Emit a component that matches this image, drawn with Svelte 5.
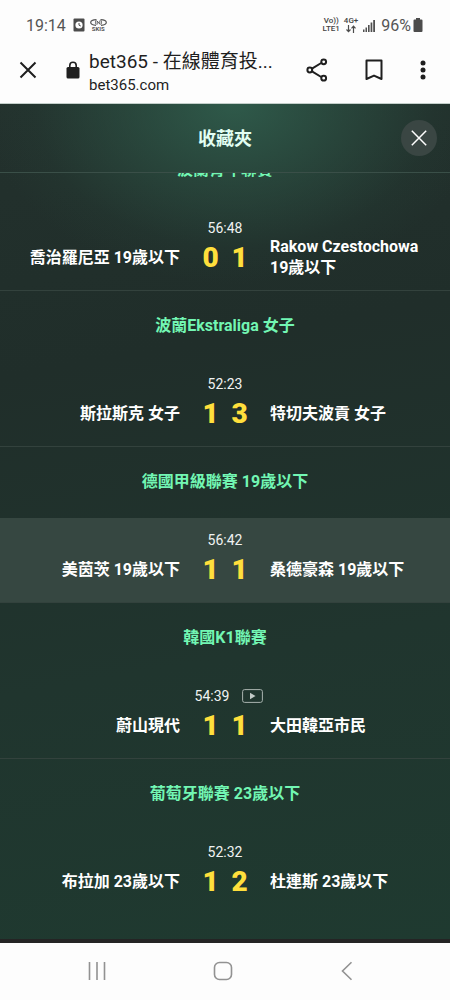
<script>
	const time = '19:14'
	const battery = '96%'

	const groups = [
		{
			league: '波蘭青年聯賽',
			clock: '56:48',
			home: '喬治羅尼亞 19歲以下',
			away: 'Rakow Czestochowa 19歲以下',
			score: [0, 1],
		},
		{
			league: '波蘭Ekstraliga 女子',
			clock: '52:23',
			home: '斯拉斯克 女子',
			away: '特切夫波貢 女子',
			score: [1, 3],
		},
		{
			league: '德國甲級聯賽 19歲以下',
			clock: '56:42',
			home: '美茵茨 19歲以下',
			away: '桑德豪森 19歲以下',
			score: [1, 1],
			active: true,
		},
		{
			league: '韓國K1聯賽',
			clock: '54:39',
			home: '蔚山現代',
			away: '大田韓亞市民',
			score: [1, 1],
			video: true,
		},
		{
			league: '葡萄牙聯賽 23歲以下',
			clock: '52:32',
			home: '布拉加 23歲以下',
			away: '杜連斯 23歲以下',
			score: [1, 2],
		},
	]
</script>

<div class="Screen">
	<header class="Browser">
		<div class="Status">
			<span class="Time">{time}</span>
			<svg class="Alarm" width="12" height="14" viewBox="0 0 12 14">
				<rect x="0.5" y="0.5" width="11" height="13" rx="1" fill="#4c4c4c" />
				<circle cx="6" cy="7" r="3.6" fill="#fff" />
				<path d="M6 5V7.2L7.8 8" fill="none" stroke="#4c4c4c" />
			</svg>
			<span class="Skis">
				<svg width="17" height="7" viewBox="0 0 17 7" fill="none" stroke="#555">
					<path d="M6.5 0.6C2.5 0.8 0.7 2.1 0.7 3.4S2.5 6 6 6.3" stroke-width="1.2" />
					<path d="M10.5 0.6c4 .2 5.8 1.5 5.8 2.8S14.500 6 11 6.300" stroke-width="1.2" />
					<path d="M6.200 1.200C5.200 2.500 5.200 4.300 6.200 5.600M10.800 1.200c1 1.300 1 3.100 0 4.400" />
					<path d="M7.200 5.500V2l2.600 3.200V1.600" stroke-width="0.900" />
				</svg>
				<small>SKIS</small>
			</span>
			<span class="Tiny Push">Vo))<br />LTE1</span>
			<span class="Tiny">
				4G+
				<svg width="10" height="8" viewBox="0 0 10 8" fill="none" stroke="#4c4c4c" stroke-width="1.200">
					<path d="M2.500 0v6.500M0.500 4.500l2 2.200 2-2.200M7.500 8V1.200M5.500 3.400l2-2.200 2 2.200" />
				</svg>
			</span>
			<svg class="Signal" width="13" height="13" viewBox="0 0 13 13" fill="#505050">
				<rect x="0" y="10.500" width="1.500" height="2.500" />
				<rect x="2.500" y="8.500" width="1.500" height="4.500" />
				<rect x="5" y="6" width="1.600" height="7" />
				<rect x="7.600" y="3.500" width="1.700" height="9.500" />
				<rect x="10.200" y="1" width="1.800" height="12" />
			</svg>
			<span class="Battery">{battery}</span>
			<svg width="10" height="14" viewBox="0 0 10 14" fill="#4c4c4c">
				<path d="M3 0h4v1.500h1.500a1 1 0 0 1 1 1V13a1 1 0 0 1-1 1h-7a1 1 0 0 1-1-1V2.500a1 1 0 0 1 1-1H3z" />
			</svg>
		</div>

		<div class="Toolbar">
			<button class="Icon" aria-label="關閉分頁">
				<svg width="18" height="18" viewBox="0 0 18 18" fill="none" stroke="#1f1f1f" stroke-width="2">
					<path d="M1.500 1.500l15 15M16.500 1.500l-15 15" />
				</svg>
			</button>
			<svg class="Lock" width="14" height="18" viewBox="0 0 14 18">
				<rect x="0.500" y="6" width="13" height="11.500" rx="1.500" fill="#1f1f1f" />
				<path d="M3.800 7V4.500a3.200 3.200 0 0 1 6.400 0V7" fill="none" stroke="#1f1f1f" stroke-width="1.600" />
			</svg>
			<div class="Address">
				<span class="PageTitle">bet365 - 在線體育投...</span>
				<span class="Host">bet365.com</span>
			</div>
			<div class="Actions">
				<button class="Icon" aria-label="分享">
					<svg width="22" height="24" viewBox="0 0 22 24" fill="none" stroke="#1f1f1f" stroke-width="2">
						<path d="M6 10.700 15.200 5M6 13.300l9.200 5.700" />
						<circle cx="3.800" cy="12" r="2.400" />
						<circle cx="17.700" cy="3.800" r="2.400" />
						<circle cx="17.700" cy="20.200" r="2.400" />
					</svg>
				</button>
				<button class="Icon" aria-label="加入書籤">
					<svg width="18" height="22" viewBox="0 0 18 22" fill="none" stroke="#1f1f1f" stroke-width="2">
						<path d="M1.500 1.500h15v18.500L9 16.600 1.500 20z" stroke-linejoin="round" />
					</svg>
				</button>
				<button class="Icon" aria-label="更多選項">
					<svg width="6" height="20" viewBox="0 0 6 20" fill="#1f1f1f">
						<circle cx="3" cy="3" r="2.500" />
						<circle cx="3" cy="10" r="2.500" />
						<circle cx="3" cy="17" r="2.500" />
					</svg>
				</button>
			</div>
		</div>
	</header>

	<main class="Panel">
		<div class="PanelHeader">
			<h1>收藏夾</h1>
			<button class="Close" aria-label="關閉">
				<svg width="16" height="16" viewBox="0 0 16 16" fill="none" stroke="#fff" stroke-width="1.500">
					<path d="M0.800 0.800l14.400 14.400M15.200 0.800 0.800 15.200" />
				</svg>
			</button>
		</div>

		<div class="Viewport">
			<div class="List">
				{#each groups as group}
					<section>
						<h2>{group.league}</h2>
						<div class="Match" class:Active={group.active}>
							<div class="Clock" class:HasVideo={group.video}>
								{group.clock}
								{#if group.video}
									<svg width="21" height="14" viewBox="0 0 21 14">
										<rect x="0.600" y="0.600" width="19.800" height="12.800" rx="2" fill="none" stroke="#a9b3af" />
										<path d="M8 3.700v6.600L13.500 7z" fill="#c3cbc8" />
									</svg>
								{/if}
							</div>
							<div class="Teams">
								<span class="Home">{group.home}</span>
								<span class="Score">
									{#each group.score as goals}
										<b>{goals}</b>
									{/each}
								</span>
								<span class="Away">{group.away}</span>
							</div>
						</div>
					</section>
				{/each}
			</div>
		</div>
	</main>

	<nav>
		<button class="Icon" aria-label="最近使用">
			<svg width="18" height="18" viewBox="0 0 18 18" stroke="#929292" stroke-width="1.600">
				<path d="M1.500 0v18M9 0v18M16.500 0v18" />
			</svg>
		</button>
		<button class="Icon" aria-label="主畫面">
			<svg width="20" height="20" viewBox="0 0 20 20" fill="none" stroke="#929292" stroke-width="1.600">
				<rect x="1.500" y="1.500" width="17" height="17" rx="5" />
			</svg>
		</button>
		<button class="Icon" aria-label="返回">
			<svg width="18" height="20" viewBox="0 0 18 20" fill="none" stroke="#929292" stroke-width="1.600">
				<path d="M11.500 1.200 2.500 10l9 8.800" />
			</svg>
		</button>
	</nav>
</div>

<style>
	:global(body) {
		margin: 0;
		font-family: Roboto, 'Noto Sans CJK TC', sans-serif;
	}

	.Screen {
		display: flex;
		flex-direction: column;
		min-height: 100vh;
		background: #fdfdfd;
	}

	button {
		padding: 0;
		border: 0;
		background: none;
		cursor: pointer;
	}

	svg {
		display: block;
		flex: none;
	}

	.Icon {
		display: flex;
		align-items: center;
		justify-content: center;
		height: 32px;
	}

	/* browser chrome */
	.Browser {
		box-sizing: border-box;
		height: 104px;
		border-bottom: 1px solid #c3cfca;
		color: #1f1f1f;
	}

	.Status {
		display: flex;
		align-items: center;
		height: 34px;
		padding: 8px 27px 0 26px;
		color: #555;
		font-size: 16px;
	}

	.Alarm {
		margin: 0 5px 0 7px;
	}

	.Skis small {
		display: block;
		font-size: 6px;
		line-height: 6px;
		font-weight: 700;
		text-align: center;
	}

	.Tiny {
		font-size: 8px;
		line-height: 8px;
		font-weight: 500;
		text-align: center;
		color: #444;
	}

	.Tiny svg {
		margin: 0 auto;
	}

	.Push {
		margin-left: auto;
		margin-right: 4px;
	}

	.Signal {
		margin: 0 5px;
	}

	.Battery {
		margin-right: 2px;
	}

	.Toolbar {
		display: flex;
		align-items: center;
		height: 56px;
		padding: 0 24px 0 19px;
	}

	.Lock {
		margin: 0 9px 0 29px;
	}

	.Address {
		display: flex;
		flex: 1;
		flex-direction: column;
		min-width: 0;
		padding-top: 2px;
		white-space: nowrap;
	}

	.PageTitle {
		font-size: 19px;
		line-height: 28px;
	}

	.Host {
		font-size: 15px;
		line-height: 18px;
	}

	.Actions {
		display: flex;
		gap: 37px;
	}

	/* favourites */
	.Panel {
		display: flex;
		flex: 1;
		flex-direction: column;
		border-bottom: 4px solid #242424;
		background:
			radial-gradient(
				250px 180px at 52% 0,
				rgba(48, 94, 77, 0.9),
				rgba(45, 85, 70, 0.55) 45%,
				rgba(40, 75, 62, 0.15) 80%,
				rgba(40, 75, 62, 0)
			),
			linear-gradient(170deg, #23312d 0%, #202e2a 30%, #20352e 65%, #1f3a30 100%);
		color: #fff;
	}

	.PanelHeader {
		display: grid;
		grid-template-columns: 36px 1fr 36px;
		align-items: center;
		height: 68px;
		padding: 0 13px;
		border-bottom: 1px solid #3a4f48;
	}

	h1 {
		grid-column: 2;
		margin: 0;
		padding-bottom: 2px;
		font-size: 18px;
		font-weight: 700;
		text-align: center;
		color: #e2fff3;
	}

	.Close {
		display: flex;
		align-items: center;
		justify-content: center;
		width: 36px;
		height: 36px;
		border-radius: 50%;
		background: #3a4643;
	}

	.Viewport {
		flex: 1;
		overflow: hidden;
	}

	/* list is scrolled a little, first league sits under the header */
	.List {
		margin-top: -38px;
		padding-bottom: 24px;
	}

	h2 {
		margin: 0;
		font-size: 16px;
		line-height: 69px;
		height: 71px;
		font-weight: 700;
		text-align: center;
		color: #72f6b3;
	}

	.Match {
		box-sizing: border-box;
		height: 85px;
		padding-top: 12px;
		border-bottom: 1px solid #33423d;
	}

	.Active {
		background: #364741;
	}

	section:last-child .Match {
		border-bottom-color: transparent;
	}

	.Clock {
		display: flex;
		align-items: center;
		justify-content: center;
		gap: 13px;
		font-size: 14px;
		line-height: 20px;
		color: #f0f3f2;
	}

	.HasVideo {
		padding-left: 8px;
	}

	.Teams {
		display: grid;
		grid-template-columns: 1fr 58px 1fr;
		column-gap: 16px;
		align-items: center;
		height: 38px;
		grid-template-rows: 38px;
		font-size: 16px;
		line-height: 21px;
		font-weight: 700;
	}

	.Home {
		text-align: right;
	}

	.Score {
		display: flex;
		font-size: 28px;
		color: #ffdf3c;
	}

	.Score b {
		flex: 1;
		text-align: center;
	}

	.Away {
		padding-right: 16px;
	}

	nav {
		display: flex;
		align-items: center;
		justify-content: space-between;
		height: 56px;
		padding: 0 92px 2px 88px;
	}
</style>
